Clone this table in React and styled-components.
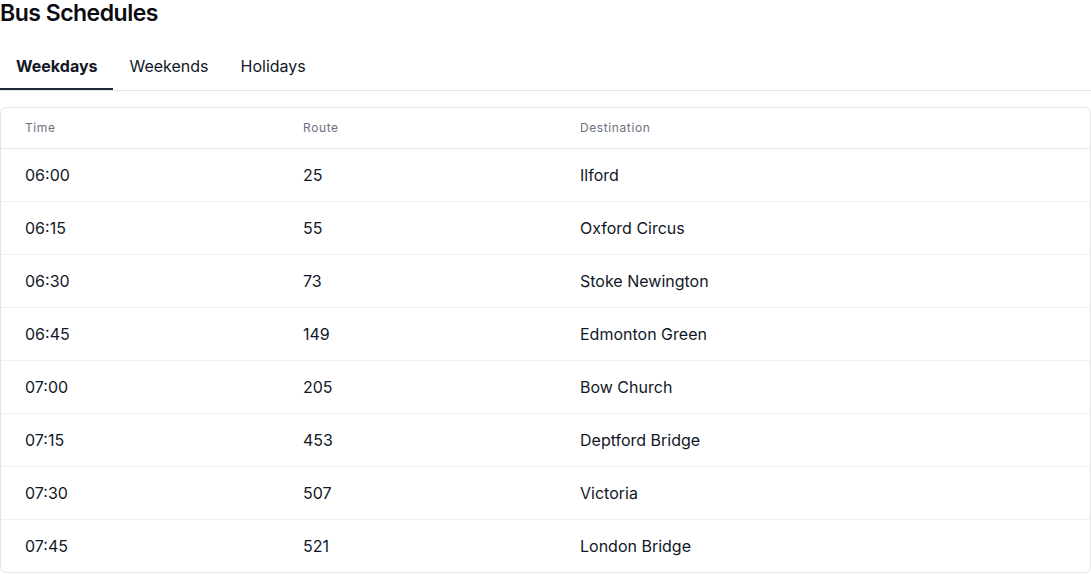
import styled, { createGlobalStyle } from "styled-components";

const GlobalStyle = createGlobalStyle`
  body {
    margin: 0;
    background: #ffffff;
    font-family: Inter, "Noto Sans", sans-serif;
    color: #111827;
  }
`;

const Page = styled.main`
  display: flex;
  flex-direction: column;
`;

const Title = styled.h1`
  margin: 0;
  padding-top: 1px;
  font-size: 23px;
  line-height: 24px;
  font-weight: 600;
  letter-spacing: -0.5px;
  color: #0b0b0f;
`;

const TabList = styled.div`
  display: flex;
  margin-top: 19px;
  border-bottom: 1px solid #e4e4e7;
`;

const Tab = styled.button`
  padding: 10px 16px;
  font-family: inherit;
  font-size: 16px;
  line-height: 24px;
  font-weight: ${(p) => (p.$active ? 700 : 400)};
  color: #111827;
  background: none;
  border: none;
  border-bottom: 2px solid ${(p) => (p.$active ? "#1f2937" : "transparent")};
  cursor: pointer;
`;

const Card = styled.div`
  margin-top: 16px;
  border: 1px solid #e4e4e7;
  border-radius: 6px;
  overflow: hidden;
`;

const Table = styled.table`
  width: 100%;
  border-collapse: collapse;
  table-layout: fixed;
`;

const HeadCell = styled.th`
  height: 39px;
  padding: 0 24px 1px;
  text-align: left;
  font-size: 12px;
  font-weight: 400;
  letter-spacing: 0.6px;
  color: #6b7280;
  border-bottom: 1px solid #e5e7eb;
`;

const Row = styled.tr`
  & + & td {
    border-top: 1px solid #eeeff1;
  }
`;

const Cell = styled.td`
  height: 51px;
  padding: 0 24px 1px;
  font-size: 16px;
  color: #111827;
`;

const schedule = [
  ["06:00", "25", "Ilford"],
  ["06:15", "55", "Oxford Circus"],
  ["06:30", "73", "Stoke Newington"],
  ["06:45", "149", "Edmonton Green"],
  ["07:00", "205", "Bow Church"],
  ["07:15", "453", "Deptford Bridge"],
  ["07:30", "507", "Victoria"],
  ["07:45", "521", "London Bridge"],
];

const App = () => {
  return (
    <Page>
      <GlobalStyle />
      <Title>Bus Schedules</Title>
      <TabList>
        <Tab $active>Weekdays</Tab>
        <Tab>Weekends</Tab>
        <Tab>Holidays</Tab>
      </TabList>
      <Card>
        <Table>
          <colgroup>
            <col style={{ width: 278 }} />
            <col style={{ width: 277 }} />
            <col />
          </colgroup>
          <thead>
            <tr>
              <HeadCell>Time</HeadCell>
              <HeadCell>Route</HeadCell>
              <HeadCell>Destination</HeadCell>
            </tr>
          </thead>
          <tbody>
            {schedule.map(([time, route, dest]) => (
              <Row key={time}>
                <Cell>{time}</Cell>
                <Cell>{route}</Cell>
                <Cell>{dest}</Cell>
              </Row>
            ))}
          </tbody>
        </Table>
      </Card>
    </Page>
  );
};

export default App;
